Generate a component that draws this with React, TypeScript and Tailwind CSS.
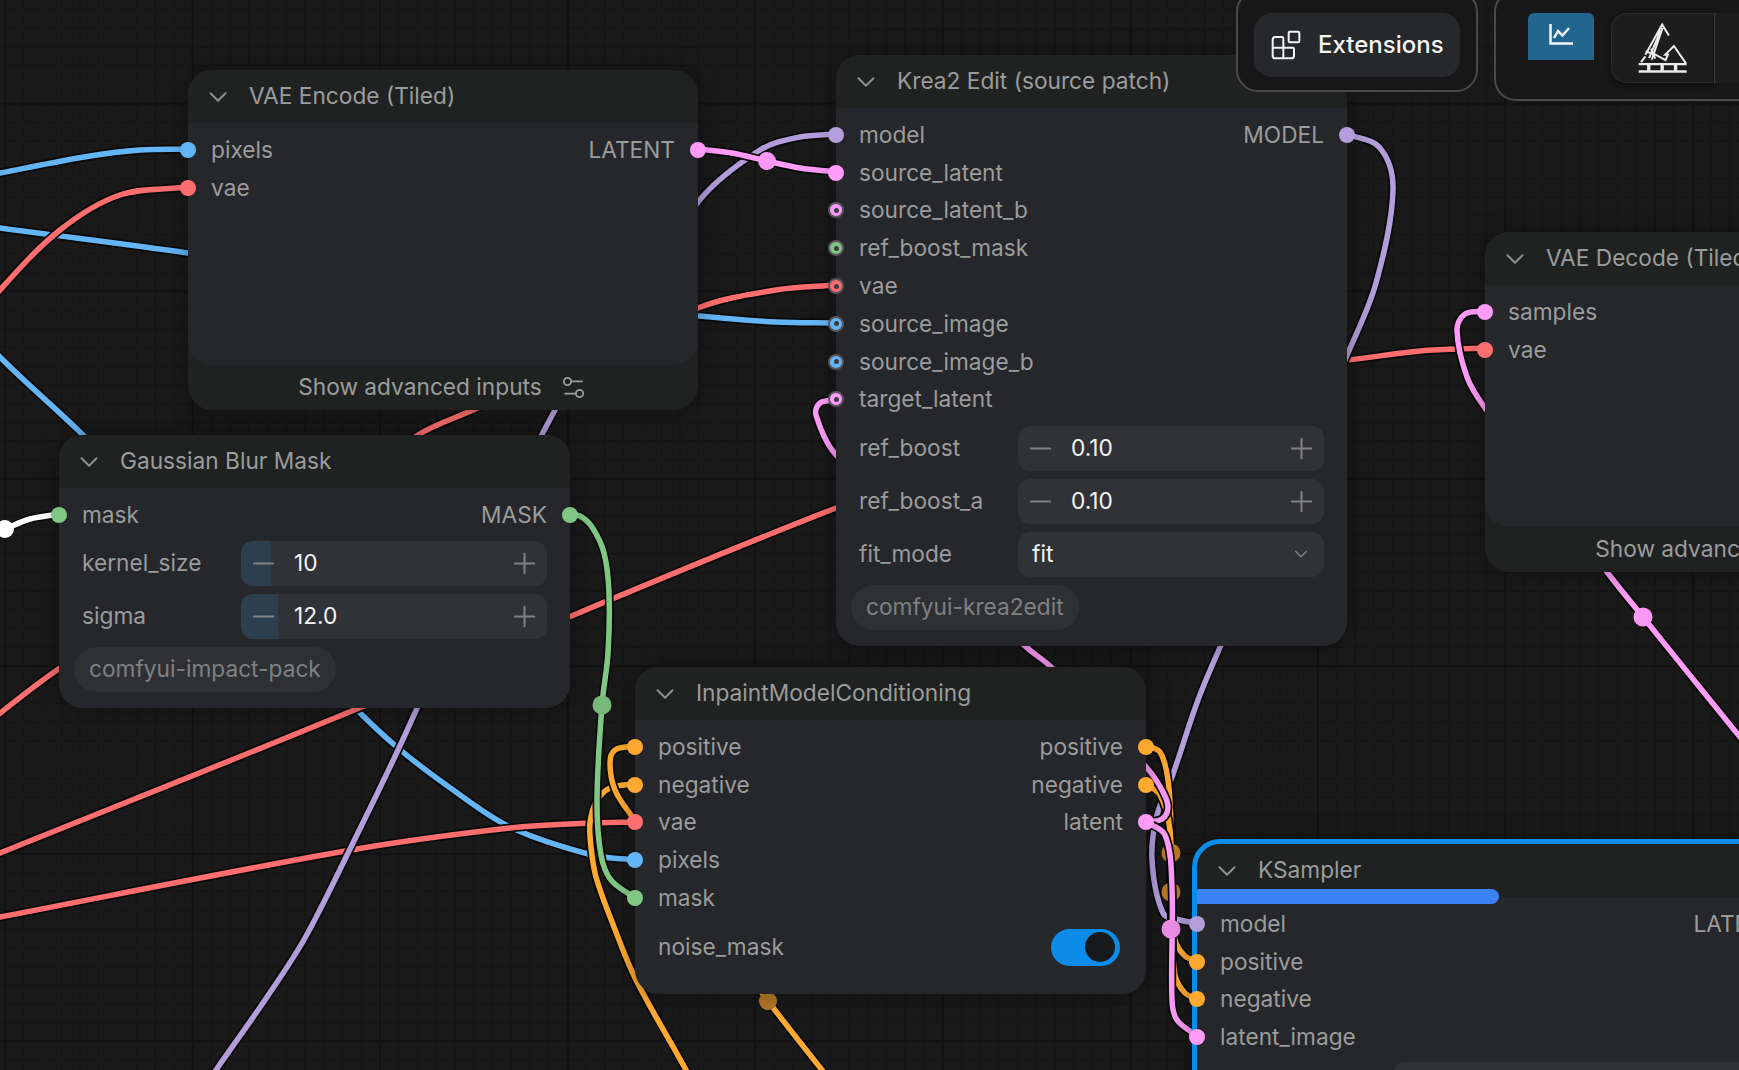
import type { ReactNode } from "react";
import { Blocks, ChevronDown, Minus, Plus, Settings2 } from "lucide-react";

type SlotType = "image" | "vae" | "latent" | "model" | "mask" | "cond";

const slotBg: Record<SlotType, string> = {
  image: "bg-[#64b5f6]",
  vae: "bg-[#ff6e6e]",
  latent: "bg-[#ff9cf9]",
  model: "bg-[#b39ddb]",
  mask: "bg-[#81c784]",
  cond: "bg-[#ffa931]",
};

const BLUE = "#64b5f6";
const RED = "#ff6e6e";
const PINK = "#ff9cf9";
const PURPLE = "#b39ddb";
const GREEN = "#81c784";
const ORANGE = "#ffa931";

// wires, drawn in this order, as points measured off the canvas
const wires: { color: string; pts: number[][] }[] = [
  { color: BLUE, pts: [[-40, 181], [0, 173], [90, 156], [140, 150], [188, 149]] },
  { color: BLUE, pts: [[-40, 222], [0, 228], [188, 253], [500, 300], [698, 316], [776, 322], [836, 323]] },
  { color: RED, pts: [[-30, 330], [0, 290], [60, 230], [120, 195], [188, 187]] },
  { color: BLUE, pts: [[-40, 310], [0, 357], [83, 435], [355, 708], [398, 748], [449, 787], [510, 827], [592, 855], [635, 860]] },
  { color: RED, pts: [[-40, 745], [60, 668], [418, 435], [473, 410], [698, 308], [776, 290], [836, 285]] },
  { color: RED, pts: [[-40, 869], [0, 853], [359, 708], [569, 617], [836, 508], [1200, 372], [1347, 360], [1420, 351], [1485, 348]] },
  { color: RED, pts: [[-40, 925], [0, 917], [351, 850], [510, 828], [592, 823], [635, 822]] },
  { color: PURPLE, pts: [[200, 1095], [216, 1070], [265, 1000], [305, 938], [351, 847], [398, 750], [555, 410], [698, 202], [760, 150], [800, 137], [836, 134]] },
  { color: ORANGE, pts: [[635, 784], [610, 788], [596, 802], [590, 823], [591, 847], [596, 877], [614, 927], [636, 980], [686, 1070], [695, 1090]] },
  { color: ORANGE, pts: [[635, 746], [615, 750], [610, 763], [615, 790], [631, 815], [768, 1001], [826, 1075]] },
  { color: GREEN, pts: [[569, 514], [580, 516], [592, 527], [604, 553], [609, 593], [608, 653], [602, 705], [597, 800], [601, 855], [611, 880], [635, 898]] },
  { color: "#ffffff", pts: [[5, 529], [30, 519], [59, 514]] },
  { color: PURPLE, pts: [[1347, 134], [1380, 148], [1393, 190], [1376, 283], [1348, 353], [1221, 645], [1198, 700], [1172, 777], [1157, 815], [1152, 860], [1163, 913], [1180, 920], [1197, 923]] },
  { color: ORANGE, pts: [[1146, 746], [1160, 752], [1168, 780], [1171, 830], [1171, 900], [1175, 940], [1185, 956], [1197, 961]] },
  { color: ORANGE, pts: [[1146, 784], [1160, 795], [1170, 830], [1171, 900], [1175, 975], [1185, 993], [1197, 999]] },
  { color: PINK, pts: [[836, 400], [820, 403], [816, 415], [836, 455], [1024, 645], [1051, 667], [1147, 768], [1162, 790], [1168, 807], [1162, 819], [1146, 822]] },
  { color: PINK, pts: [[1146, 822], [1165, 835], [1172, 887], [1172, 1000], [1177, 1020], [1197, 1036]] },
  { color: PINK, pts: [[698, 149], [732, 153], [767, 161], [800, 168], [836, 172]] },
  { color: PINK, pts: [[1485, 311], [1465, 314], [1457, 330], [1467, 377], [1485, 408], [1607, 572], [1643, 617], [1760, 762]] },
];

const reroutes = [
  { x: 767, y: 161, color: "#fb97f6", r: 9 },
  { x: 602, y: 705, color: "#78b97b", r: 9.5 },
  { x: 5, y: 529, color: "#ffffff", r: 9 },
  { x: 768, y: 1001, color: "#b57a27", r: 9 },
  { x: 1643, y: 617, color: "#fb97f6", r: 9.5 },
];

// tangent at point i, as a unit vector along its two neighbours
function tangent(p: number[][], i: number) {
  const a = p[Math.max(i - 1, 0)];
  const c = p[Math.min(i + 1, p.length - 1)];
  const len = Math.hypot(c[0] - a[0], c[1] - a[1]) || 1;
  return [(c[0] - a[0]) / len, (c[1] - a[1]) / len];
}

function smooth(p: number[][]) {
  let d = `M${p[0][0]} ${p[0][1]}`;
  for (let i = 0; i < p.length - 1; i++) {
    const b = p[i];
    const c = p[i + 1];
    const h = Math.hypot(c[0] - b[0], c[1] - b[1]) / 3;
    const t1 = tangent(p, i);
    const t2 = tangent(p, i + 1);
    d += ` C${b[0] + t1[0] * h} ${b[1] + t1[1] * h} ${c[0] - t2[0] * h} ${c[1] - t2[1] * h} ${c[0]} ${c[1]}`;
  }
  return d;
}

function Wires() {
  return (
    <svg className="absolute inset-0" width="1739" height="1070" fill="none" strokeLinecap="round">
      {wires.map((w, i) => (
        <g key={i}>
          <path d={smooth(w.pts)} stroke="#0a0a0a" strokeWidth="9" />
          <path d={smooth(w.pts)} stroke={w.color} strokeWidth="5.5" />
          {/* KSampler's two conditioning reroutes sit under the latent wire */}
          {i === 14 && (
            <>
              <circle cx="1171" cy="853" r="9.5" fill="#b57a27" />
              <circle cx="1171" cy="892" r="9.5" fill="#b57a27" />
            </>
          )}
        </g>
      ))}
      {reroutes.map((r) => (
        <circle key={`${r.x}-${r.y}`} cx={r.x} cy={r.y} r={r.r} fill={r.color} />
      ))}
      <circle cx="1171" cy="929" r="9.5" fill="#ee90e8" />
    </svg>
  );
}

function Slot({ type, right, open }: { type: SlotType; right?: boolean; open?: boolean }) {
  return (
    <span
      className={`absolute top-1/2 size-[16px] -translate-y-1/2 rounded-full ${slotBg[type]} ${
        right ? "right-[-8px]" : "left-[-8px]"
      } ${open ? "flex items-center justify-center border-2 border-[#5a5660]" : ""}`}
    >
      {open && <span className="size-[5px] rounded-full bg-[#3b3b42]" />}
    </span>
  );
}

function Row({
  label,
  type,
  open,
  out,
  outType,
}: {
  label: string;
  type: SlotType;
  open?: boolean;
  out?: string;
  outType?: SlotType;
}) {
  return (
    <div className="relative flex h-[37.8px] items-center justify-between px-[23px]">
      <Slot type={type} open={open} />
      <span>{label}</span>
      {out && <span>{out}</span>}
      {outType && <Slot type={outType} right />}
    </div>
  );
}

function NumberWidget({ label, value, fill }: { label: string; value: string; fill?: string }) {
  return (
    <div className="flex h-[45px] items-center pr-[23px] pl-[23px]">
      <span className="w-[159px] shrink-0">{label}</span>
      <div className="relative flex h-[45px] flex-1 items-center justify-between overflow-hidden rounded-[12px] bg-[#313237] px-[6px]">
        {fill && <div className={`absolute inset-y-0 left-0 bg-[#2c3f4e] ${fill}`} />}
        <div className="relative flex items-center">
          <Minus size={33} strokeWidth={1.5} className="text-[#808181]" />
          <span className="ml-[14px] text-[#f4f4f4]">{value}</span>
        </div>
        <Plus size={33} strokeWidth={1.5} className="relative text-[#808181]" />
      </div>
    </div>
  );
}

function Badge({ children }: { children: ReactNode }) {
  return (
    <div className="mt-2 ml-[15px] flex h-[45px] w-fit items-center rounded-full bg-[#2f3034] px-[15px] text-[#7f8082]">
      {children}
    </div>
  );
}

function Header({ title }: { title: string }) {
  return (
    <header className="flex h-[53px] items-center rounded-t-[24px] bg-[#202222]">
      <ChevronDown size={30} strokeWidth={1.5} className="mr-4 ml-[15px] text-[#8f9191]" />
      <span>{title}</span>
    </header>
  );
}

function AdvancedFooter() {
  return (
    <div className="flex h-[45px] items-center justify-center gap-[17px]">
      <span>Show advanced inputs</span>
      <Settings2 size={29} strokeWidth={1.5} className="text-[#9b9c9c]" />
    </div>
  );
}

function Logo() {
  return (
    <svg width="52" height="54" viewBox="80 50 155 160" fill="none" stroke="#ececec" strokeWidth="6">
      <path d="M85 178H228M85 200H228" strokeWidth="7" />
      <path d="M115 180V198M155 180V198M195 180V198" strokeWidth="10" />
      <path d="M92 172L105 155M105 150L155 60L175 93M116 160L150 78M124 165L156 70" />
      <path d="M106 140L135 150L165 166L172 150L164 150L190 124L226 176M122 132L134 162" />
    </svg>
  );
}

export default function App() {
  return (
    <div className="relative h-[1070px] w-[1739px] overflow-hidden bg-[#191919] bg-[linear-gradient(#121212_2px,transparent_2px),linear-gradient(90deg,#121212_2px,transparent_2px),linear-gradient(#161616_2px,transparent_2px),linear-gradient(90deg,#161616_2px,transparent_2px)] bg-[size:187.6px_187.6px,187.6px_187.6px,18.76px_18.76px,18.76px_18.76px] bg-[position:4px_102.6px,4px_102.6px,4px_102.6px,4px_102.6px] font-[Inter,sans-serif] text-[22.7px] text-[#9b9c9c]">
      <Wires />

      {/* VAE Encode */}
      <section className="absolute top-[70px] left-[188px] w-[510px] rounded-[24px] bg-[#202222] shadow-[0_0_24px_rgba(0,0,0,0.35)]">
        <Header title="VAE Encode (Tiled)" />
        <div className="h-[242px] rounded-b-[24px] bg-[#26272a] pt-2">
          <Row label="pixels" type="image" out="LATENT" outType="latent" />
          <Row label="vae" type="vae" />
        </div>
        <AdvancedFooter />
      </section>

      {/* Gaussian Blur Mask */}
      <section className="absolute top-[435px] left-[59px] w-[511px] rounded-[24px] bg-[#26272a] pb-4 shadow-[0_0_24px_rgba(0,0,0,0.35)]">
        <Header title="Gaussian Blur Mask" />
        <div className="pt-2">
          <Row label="mask" type="mask" out="MASK" outType="mask" />
          <div className="mt-[7px] flex flex-col gap-2">
            <NumberWidget label="kernel_size" value="10" fill="w-[30px]" />
            <NumberWidget label="sigma" value="12.0" fill="w-[37px]" />
          </div>
          <Badge>comfyui-impact-pack</Badge>
        </div>
      </section>

      {/* Krea2 Edit */}
      <section className="absolute top-[55px] left-[836px] w-[511px] rounded-[24px] bg-[#26272a] pb-4 shadow-[0_0_24px_rgba(0,0,0,0.35)]">
        <Header title="Krea2 Edit (source patch)" />
        <div className="pt-2">
          <Row label="model" type="model" out="MODEL" outType="model" />
          <Row label="source_latent" type="latent" />
          <Row label="source_latent_b" type="latent" open />
          <Row label="ref_boost_mask" type="mask" open />
          <Row label="vae" type="vae" open />
          <Row label="source_image" type="image" open />
          <Row label="source_image_b" type="image" open />
          <Row label="target_latent" type="latent" open />
          <div className="mt-[7.6px] flex flex-col gap-2">
            <NumberWidget label="ref_boost" value="0.10" />
            <NumberWidget label="ref_boost_a" value="0.10" />
            <div className="flex h-[45px] items-center px-[23px]">
              <span className="w-[159px] shrink-0">fit_mode</span>
              <div className="flex h-[45px] flex-1 items-center justify-between rounded-[12px] bg-[#313237] pr-3 pl-[14px] text-[#f4f4f4]">
                <span>fit</span>
                <ChevronDown size={22} strokeWidth={1.5} className="text-[#808181]" />
              </div>
            </div>
          </div>
          <Badge>comfyui-krea2edit</Badge>
        </div>
      </section>

      {/* VAE Decode */}
      <section className="absolute top-[232px] left-[1485px] w-[510px] rounded-[24px] bg-[#202222] shadow-[0_0_24px_rgba(0,0,0,0.35)]">
        <Header title="VAE Decode (Tiled)" />
        <div className="h-[242px] rounded-b-[24px] bg-[#26272a] pt-2">
          <Row label="samples" type="latent" />
          <Row label="vae" type="vae" />
        </div>
        <AdvancedFooter />
      </section>

      {/* InpaintModelConditioning */}
      <section className="absolute top-[667px] left-[635px] w-[511px] rounded-[24px] bg-[#26272a] pb-[28px] shadow-[0_0_24px_rgba(0,0,0,0.35)]">
        <Header title="InpaintModelConditioning" />
        <div className="pt-2">
          <Row label="positive" type="cond" out="positive" outType="cond" />
          <Row label="negative" type="cond" out="negative" outType="cond" />
          <Row label="vae" type="vae" out="latent" outType="latent" />
          <Row label="pixels" type="image" />
          <Row label="mask" type="mask" />
          <div className="mt-3 flex h-[37px] items-center justify-between pr-[26px] pl-[23px]">
            <span>noise_mask</span>
            <div className="flex h-[37px] w-[69px] items-center justify-end rounded-full bg-[#0b8ce9] pr-[5px]">
              <span className="size-[30px] rounded-full bg-[#17181a]" />
            </div>
          </div>
        </div>
      </section>

      {/* KSampler */}
      <section className="absolute top-[839px] left-[1192px] w-[616px] rounded-[28px] border-[5px] border-[#0b8ce9] bg-[#26272a] shadow-[0_0_24px_rgba(0,0,0,0.35)]">
        <Header title="KSampler" />
        <div className="absolute top-[45px] left-0 h-[15px] w-[302px] rounded-r-full bg-[#3b82f6]" />
        <div className="pt-2">
          <Row label="model" type="model" out="LATENT" outType="latent" />
          <Row label="positive" type="cond" />
          <Row label="negative" type="cond" />
          <Row label="latent_image" type="latent" />
          <div className="mt-[6px] ml-[196px] h-[45px] rounded-[12px] bg-[#313237]" />
        </div>
      </section>

      {/* Top bar */}
      <div className="absolute top-[-10px] left-[1236px] h-[102px] w-[242px] rounded-[22px] border-2 border-[#4a4a4c] bg-[#171717] pt-[21px] pl-4">
        <div className="flex h-[64px] w-[206px] items-center gap-4 rounded-[18px] bg-[#26282b] pl-4 text-[24px] font-medium text-[#f5f5f5]">
          <Blocks size={32} strokeWidth={1.5} />
          <span>Extensions</span>
        </div>
      </div>
      <div className="absolute top-[-10px] left-[1494px] flex h-[111px] w-[300px] items-start rounded-[22px] border-2 border-[#4a4a4c] bg-[#171717] pt-[21px] pl-[32px]">
        <div className="flex h-[47px] w-[66px] justify-center rounded-t-[6px] bg-[#22658f] pt-[11px]">
          <svg width="24" height="21" viewBox="0 0 24 21" fill="none" stroke="#f4f4f4" strokeWidth="2.5">
            <path d="M1.5 0V19.5H24M5 14L9 7L13.5 11.5L20 4" />
          </svg>
        </div>
        <div className="ml-[17px] flex h-[70px] w-[102px] items-center justify-center rounded-l-[16px] border border-r-0 border-[#2c2c2c] bg-[#1d1d1d] shadow-[0_2px_6px_rgba(0,0,0,0.5)]">
          <Logo />
        </div>
        <div className="ml-[1px] h-[70px] w-[60px] border-l border-[#3a3a3a] bg-[#1d1d1d]" />
      </div>
    </div>
  );
}
